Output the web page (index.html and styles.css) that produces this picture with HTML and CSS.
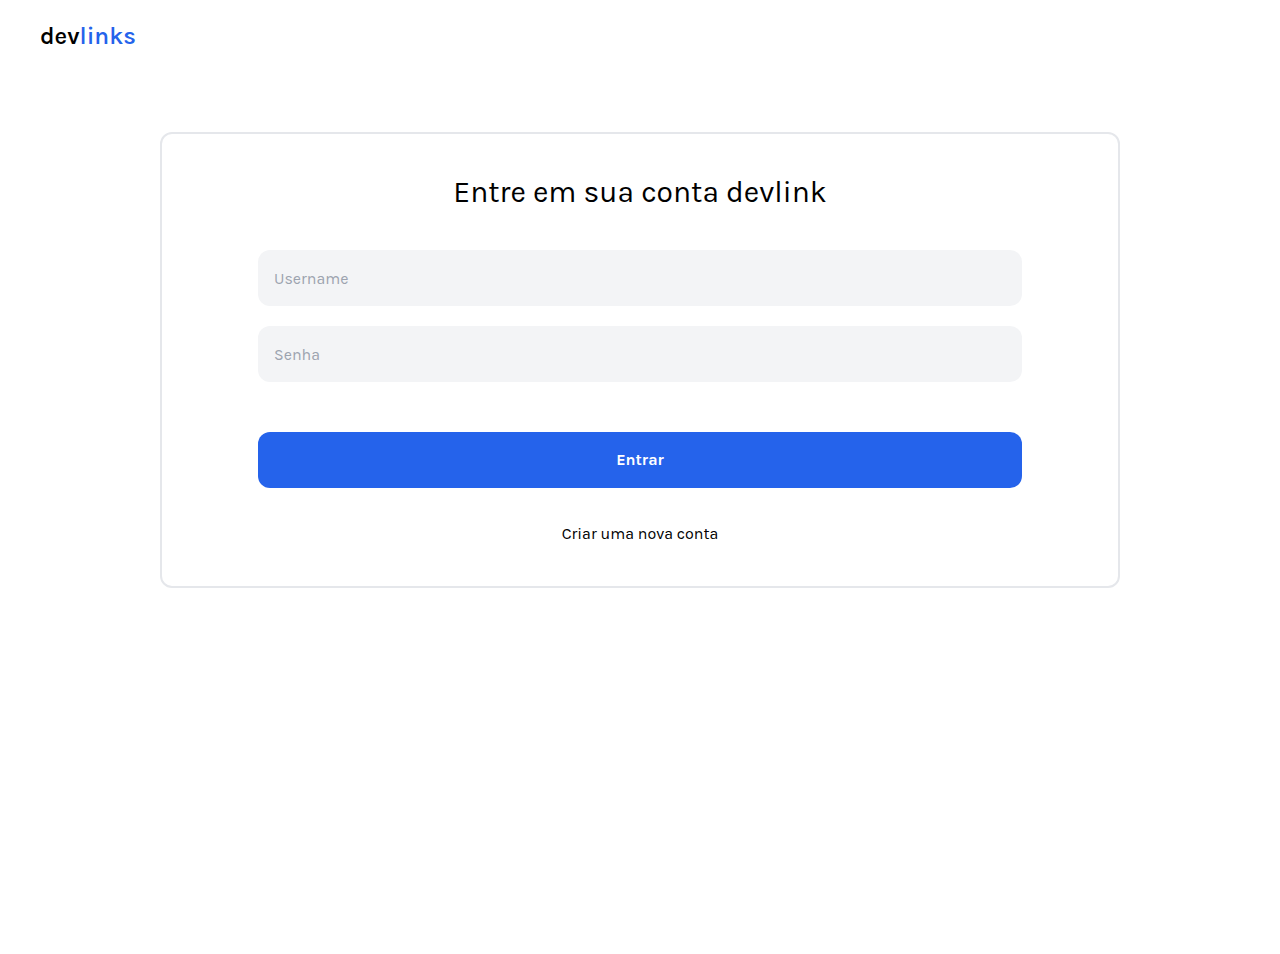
FILE: index.html
```html
<!DOCTYPE html>
<html lang="pt-BR">
<head>
<meta charset="utf-8">
<meta name="viewport" content="width=device-width, initial-scale=1">
<title>devlinks</title>
<link rel="stylesheet" href="styles.css">
</head>
<body>
<header class="header">
  <a class="logo" href="#">dev<span class="logo-accent">links</span></a>
</header>
<main class="main">
  <section class="card">
    <h1 class="title">Entre em sua conta devlink</h1>
    <form class="form">
      <input class="field" type="text" aria-label="Username" placeholder="Username">
      <input class="field" type="password" aria-label="Senha" placeholder="Senha">
      <button class="submit" type="submit">Entrar</button>
    </form>
    <a class="signup" href="#">Criar uma nova conta</a>
  </section>
</main>
</body>
</html>
```
FILE: styles.css
```css
* {
  box-sizing: border-box;
}

body {
  margin: 0;
  background: #fff;
  color: #000;
  font-family: Karla, Inter, "Liberation Sans", sans-serif;
  font-size: 16px;
  line-height: 24px;
}

.header {
  padding: 20px 40px;
}

.logo {
  display: inline-block;
  color: #000;
  font-size: 24px;
  font-weight: 600;
  line-height: 32px;
  text-decoration: none;
}

.logo-accent {
  color: #2563eb;
}

.main {
  padding: 60px 40px;
}

.card {
  display: flex;
  flex-direction: column;
  align-items: center;
  max-width: 960px;
  margin: 0 auto;
  padding: 40px 96px;
  border: 2px solid #e5e7eb;
  border-radius: 12px;
}

.title {
  margin: 0 0 40px;
  font-size: 30px;
  font-weight: 400;
  line-height: 36px;
  text-align: center;
}

.form {
  display: flex;
  flex-direction: column;
  gap: 20px;
  width: 100%;
  margin-bottom: 34px;
}

.field,
.submit {
  width: 100%;
  height: 56px;
  padding: 16px;
  border: 0;
  border-radius: 12px;
  font: inherit;
}

.field {
  background: #f3f4f6;
  color: #000;
}

.field::placeholder {
  color: #9ca3af;
}

.submit {
  margin-top: 30px;
  background: #2563eb;
  color: #fff;
  font-weight: 700;
  cursor: pointer;
}

.signup {
  color: #000;
  text-decoration: none;
}
```
